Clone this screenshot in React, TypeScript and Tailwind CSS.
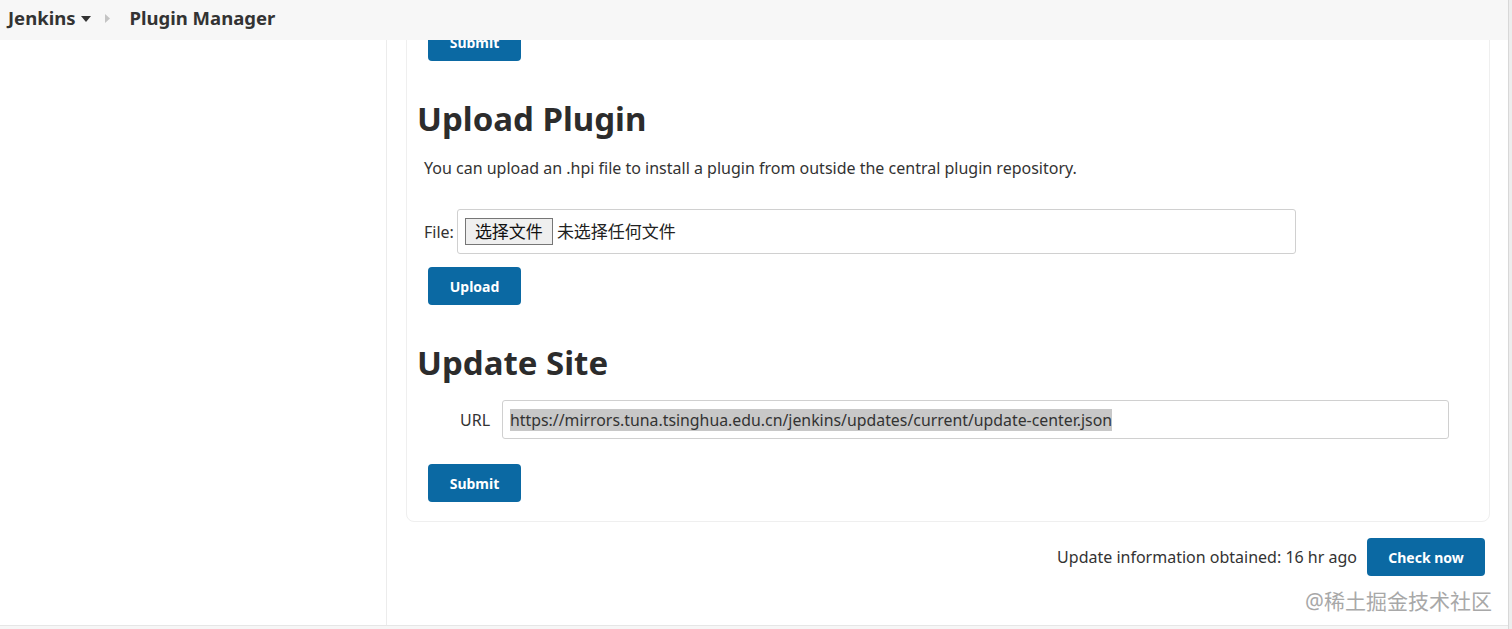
import React from "react";

const sans = "font-['Noto_Sans','Noto_Sans_CJK_SC',sans-serif]";

function BlueButton({ label, className = "" }: { label: string; className?: string }) {
  return (
    <button
      type="button"
      className={`flex h-[38px] w-[93px] items-center justify-center rounded-[4px] bg-[#0b69a3] text-[14px] font-bold text-white ${className}`}
    >
      {label}
    </button>
  );
}

export default function App() {
  return (
    <div className={`relative flex h-[629px] w-[1512px] overflow-hidden bg-white text-[#333] ${sans}`}>
      <div className="flex min-w-0 flex-1 flex-col">
        <header className="flex h-[40px] shrink-0 items-center bg-[#f7f7f7] pb-[4px] pl-[8px] text-[18.5px] font-bold text-[#333]">
          <span>Jenkins</span>
          <svg className="ml-[5px] mt-[1px]" width="10" height="6" viewBox="0 0 10 6" aria-hidden="true">
            <path d="M0 0h10L5 6z" fill="#333" />
          </svg>
          <svg className="ml-[14px]" width="5" height="9" viewBox="0 0 5 9" aria-hidden="true">
            <path d="M0 0l5 4.5L0 9z" fill="#c4c4c4" />
          </svg>
          <span className="ml-[20px]">Plugin Manager</span>
        </header>

        <div className="flex min-h-0 flex-1">
          <aside className="w-[387px] shrink-0 border-r border-[#ececec]" />

          <main className="min-w-0 flex-1 overflow-hidden pl-[19px] pr-[18px]">
            <section className="-mt-[40px] rounded-b-[8px] border border-[#efefef] pb-[19px] pl-[21px] pt-[22px]">
              <BlueButton label="Submit" />

              <h1 className="-ml-[11px] mt-[36px] text-[33px] font-bold leading-[44px] text-[#2c2c2c]">
                Upload Plugin
              </h1>
              <p className="-ml-[4px] mt-[15px] text-[16px] leading-[24px] text-[#333]">
                You can upload an .hpi file to install a plugin from outside the central plugin repository.
              </p>

              <div className="-ml-[4px] mt-[29px] flex items-center">
                <span className="text-[16px]">File:</span>
                <div className="ml-[3px] flex h-[45px] w-[839px] items-center rounded-[3px] border border-[#d0d0d0] pl-[7px]">
                  <span className="flex h-[27px] items-center border border-[#767676] bg-[#efefef] px-[9px] text-[17px] text-[#111]">
                    选择文件
                  </span>
                  <span className="ml-[4px] text-[17px] text-[#222]">未选择任何文件</span>
                </div>
              </div>

              <BlueButton label="Upload" className="mt-[13px]" />

              <h1 className="-ml-[11px] mt-[36px] text-[33px] font-bold leading-[44px] text-[#2c2c2c]">
                Update Site
              </h1>

              <div className="mt-[15px] flex items-center pl-[32px]">
                <span className="w-[42px] text-[16px]">URL</span>
                <div className="flex h-[39px] w-[947px] items-center rounded-[3px] border border-[#d0d0d0] pl-[7px]">
                  <span className="bg-[#c8c8c8] text-[15.85px] leading-[22px] text-[#333]">
                    https://mirrors.tuna.tsinghua.edu.cn/jenkins/updates/current/update-center.json
                  </span>
                </div>
              </div>

              <BlueButton label="Submit" className="mt-[25px]" />
            </section>

            <div className="mt-[16px] flex items-center justify-end pr-[5px]">
              <span className="text-[16px] text-[#333]">Update information obtained: 16 hr ago</span>
              <BlueButton label="Check now" className="ml-[10px] w-[118px]" />
            </div>
          </main>
        </div>

        <div className="h-[4px] shrink-0 border-t border-[#e6e6e6] bg-[#f6f6f6]" />
      </div>

      <div className="w-[4px] shrink-0 border-l border-[#d8d8d8] bg-[#ededed]" />

      <span className="pointer-events-none absolute bottom-[14px] right-[20px] text-[21px] leading-[28px] text-[#a8a8a8]">
        @稀土掘金技术社区
      </span>
    </div>
  );
}
